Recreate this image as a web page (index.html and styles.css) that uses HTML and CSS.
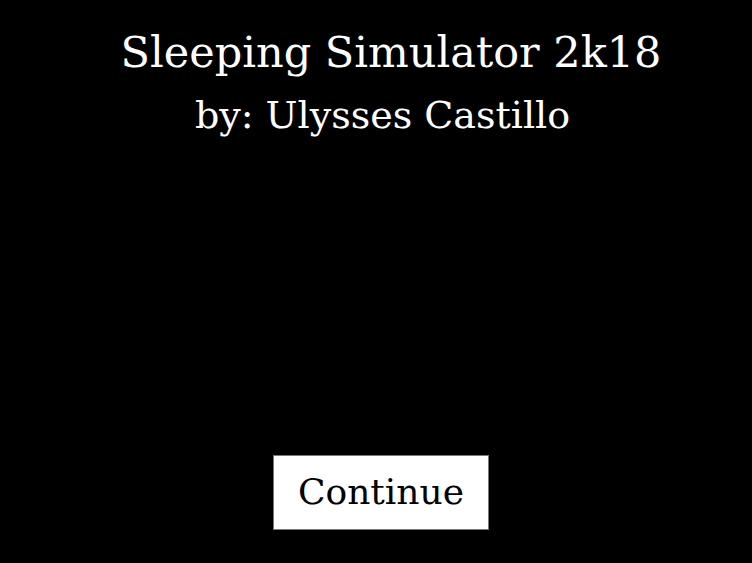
FILE: index.html
```html
<!DOCTYPE html>
<html>
<head>
<meta charset="utf-8">
<link rel="stylesheet" href="styles.css">
</head>
<body>
<div class="screen">
  <h1 class="title">Sleeping Simulator 2k18</h1>
  <h2 class="byline">by: Ulysses Castillo</h2>
  <div class="spacer"></div>
  <button class="continue">Continue</button>
</div>
</body>
</html>
```
FILE: styles.css
```css
html, body {
  margin: 0;
  padding: 0;
  background: #000;
  width: 752px;
  height: 563px;
  overflow: hidden;
}
.screen {
  display: flex;
  flex-direction: column;
  align-items: center;
  height: 563px;
  font-family: "DejaVu Serif", serif;
  color: #fff;
}
.title {
  margin: 28px 0 0 30px;
  font-size: 43px;
  font-weight: normal;
  line-height: 48px;
  white-space: nowrap;
}
.byline {
  margin: 17px 0 0 13px;
  font-size: 38px;
  font-weight: normal;
  line-height: 44px;
  white-space: nowrap;
}
.spacer {
  flex: 1;
}
.continue {
  margin: 0 0 33px 10px;
  width: 216px;
  height: 75px;
  background: #fff;
  border: 1px solid #777;
  font-family: "DejaVu Serif", serif;
  font-size: 36px;
  color: #000;
  padding: 0 0 3px 0;
}
```
